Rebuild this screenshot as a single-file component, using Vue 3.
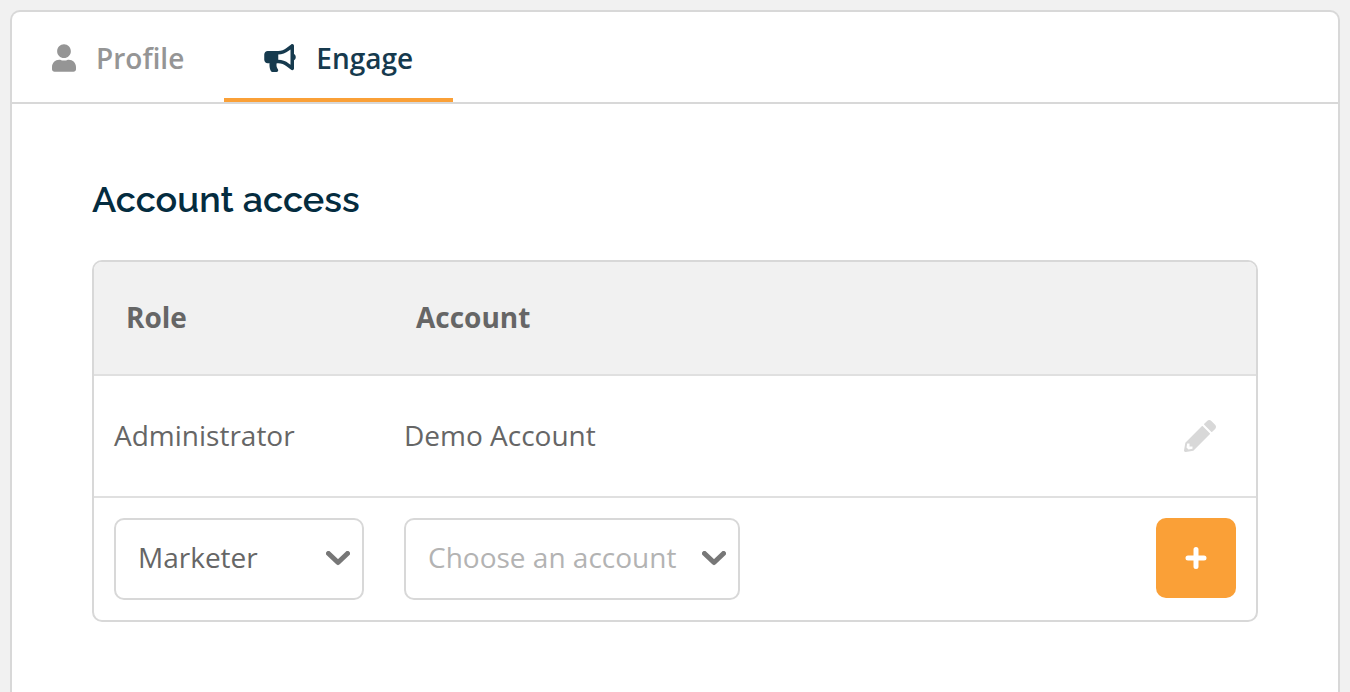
<script setup>
import { ref } from 'vue'

const tabs = [
  {
    id: 'profile',
    label: 'Profile',
    width: 24,
    viewBox: '0 0 448 512',
    path: 'M224 256c70.7 0 128-57.3 128-128S294.7 0 224 0 96 57.3 96 128s57.3 128 128 128zm89.6 32h-16.7c-22.2 10.2-46.9 16-72.9 16s-50.6-5.8-72.9-16h-16.7C60.2 288 0 348.2 0 422.4V464c0 26.5 21.5 48 48 48h352c26.5 0 48-21.5 48-48v-41.6c0-74.2-60.2-134.4-134.4-134.4z',
  },
  {
    id: 'engage',
    label: 'Engage',
    width: 32,
    viewBox: '0 0 576 512',
    path: 'M576 240c0-23.63-12.95-44.04-32-55.12V32.01C544 23.26 537.02 0 512 0c-7.12 0-14.19 2.38-19.98 7.02l-85.03 68.03C364.28 109.19 310.66 128 256 128H64c-35.35 0-64 28.65-64 64v96c0 35.35 28.65 64 64 64h33.7c-1.39 10.48-2.18 21.14-2.18 32 0 39.77 9.26 77.35 25.56 110.94 5.19 10.69 16.52 17.06 28.4 17.06h74.28c26.05 0 41.69-29.84 25.9-50.56-16.4-21.52-26.15-48.36-26.15-77.44 0-11.11 1.62-21.79 4.41-32H256c54.66 0 108.28 18.81 150.99 52.95l85.03 68.03a32.023 32.023 0 0 0 19.98 7.02c24.92 0 32-22.78 32-32V295.13C563.05 284.04 576 263.63 576 240zm-96 141.42l-33.05-26.44C392.95 311.78 325.12 288 256 288v-96c69.12 0 136.95-23.78 190.95-66.98L480 98.58v282.84z',
  },
]
const active = ref('engage')
const rows = ref([{ role: 'Administrator', account: 'Demo Account' }])
const role = ref('Marketer')
const account = ref('')

function addRow() {
  if (account.value) {
    rows.value.push({ role: role.value, account: account.value })
    account.value = ''
  }
}
</script>

<template>
  <main class="card">
    <nav class="tabs" aria-label="Settings">
      <button
        v-for="tab in tabs"
        :key="tab.id"
        type="button"
        class="tab"
        :class="{ active: tab.id === active }"
        @click="active = tab.id"
      >
        <svg :width="tab.width" height="28" :viewBox="tab.viewBox" aria-hidden="true">
          <path :d="tab.path" fill="currentColor" />
        </svg>
        <span>{{ tab.label }}</span>
      </button>
    </nav>

    <section class="content">
      <h1>Account access</h1>
      <div class="frame">
        <table>
          <thead>
            <tr>
              <th class="role-col" scope="col">Role</th>
              <th scope="col">Account</th>
              <th class="action-col"></th>
            </tr>
          </thead>
          <tbody>
            <tr v-for="row in rows" :key="row.role + row.account" class="entry">
              <td>{{ row.role }}</td>
              <td>{{ row.account }}</td>
              <td class="action">
                <button type="button" class="edit" aria-label="Edit">
                  <svg width="32" height="32" viewBox="0 0 512 512" aria-hidden="true">
                    <path
                      fill="currentColor"
                      d="M497.9 142.1l-46.1 46.1c-4.7 4.7-12.3 4.7-17 0l-111-111c-4.7-4.7-4.7-12.3 0-17l46.1-46.1c18.7-18.7 49.1-18.7 67.9 0l60.1 60.1c18.8 18.7 18.8 49.1 0 67.9zM284.2 99.8L21.6 362.4.4 483.9c-2.9 16.4 11.4 30.6 27.8 27.8l121.5-21.3 262.6-262.6c4.7-4.7 4.7-12.3 0-17l-111-111c-4.8-4.7-12.4-4.7-17.1 0zM88 424h48v36.3l-64.5 11.3-31.1-31.1L51.7 376H88v48z"
                    />
                  </svg>
                </button>
              </td>
            </tr>
            <tr class="new">
              <td>
                <div class="picker role">
                  <select v-model="role" aria-label="Role">
                    <option>Marketer</option>
                    <option>Administrator</option>
                  </select>
                  <svg width="24" height="16" viewBox="0 0 24 16" aria-hidden="true">
                    <path d="M2.5 2.5L12 11.5L21.5 2.5" />
                  </svg>
                </div>
              </td>
              <td>
                <div class="picker account">
                  <select v-model="account" :class="{ empty: !account }" aria-label="Account">
                    <option value="" disabled>Choose an account</option>
                    <option>Demo Account</option>
                  </select>
                  <svg width="24" height="16" viewBox="0 0 24 16" aria-hidden="true">
                    <path d="M2.5 2.5L12 11.5L21.5 2.5" />
                  </svg>
                </div>
              </td>
              <td class="action">
                <button type="button" class="add" aria-label="Add" @click="addRow">
                  <svg width="22" height="22" viewBox="0 0 22 22" aria-hidden="true">
                    <path d="M11 2.5V19.5M3 11H19" />
                  </svg>
                </button>
              </td>
            </tr>
          </tbody>
        </table>
      </div>
    </section>
  </main>
</template>

<style>
body {
  background: #f1f1f1;
}
</style>

<style scoped>
.card {
  box-sizing: border-box;
  min-height: calc(100vh - 10px);
  border: 2px solid #d8d8d8;
  border-bottom: 0;
  border-radius: 10px 10px 0 0;
  background: #fff;
  color: #666;
  font: 28px/40px "Open Sans", "Noto Sans", sans-serif;
}
:global(#app) {
  padding: 10px 10px 0;
}
button,
select {
  margin: 0;
  padding: 0;
  border: 0;
  background: none;
  color: inherit;
  font: inherit;
  cursor: pointer;
}
svg {
  display: block;
  flex: none;
}
.tabs {
  display: flex;
  border-bottom: 2px solid #d8d8d8;
}
.tab {
  display: flex;
  align-items: center;
  gap: 20px;
  height: 90px;
  padding: 6px 40px 0;
  border-bottom: 4px solid transparent;
  color: #959595;
  font-weight: 600;
}
.tab.active {
  border-bottom-color: #faa037;
  color: #163a4e;
}
.content {
  padding: 71px 80px;
}
h1 {
  margin: 0 0 37px;
  color: #042c3f;
  font: 600 36px/48px Raleway, Lato, sans-serif;
}
.frame {
  overflow: hidden;
  border: 2px solid #d8d8d8;
  border-radius: 10px;
}
table {
  width: 100%;
  border-spacing: 0;
  table-layout: fixed;
}
.role-col {
  width: 290px;
}
.action-col {
  width: 120px;
}
th {
  box-sizing: border-box;
  height: 114px;
  padding: 0 32px 2px;
  border-bottom: 2px solid #e0e0e0;
  background: #f1f1f1;
  font-weight: 700;
  text-align: left;
}
td {
  padding: 20px;
}
.entry td {
  box-sizing: border-box;
  height: 122px;
  padding: 18px 20px 20px;
  border-bottom: 2px solid #e0e0e0;
}
.entry .action {
  padding: 20px;
}
.role-col,
.action-col {
  box-sizing: border-box;
}
.action button {
  display: flex;
  align-items: center;
  justify-content: center;
  margin-left: auto;
}
.edit {
  width: 72px;
  height: 72px;
  color: #d8d8d8;
}
.picker {
  display: grid;
  align-items: center;
}
.picker > * {
  grid-area: 1 / 1;
}
.picker.role {
  width: 250px;
}
.picker.account {
  width: 336px;
}
select {
  box-sizing: border-box;
  width: 100%;
  height: 82px;
  padding: 0 48px 4px 22px;
  border: 2px solid #d8d8d8;
  border-radius: 10px;
  background: #fff;
  appearance: none;
}
select.empty {
  color: #b3b3b3;
}
.picker svg {
  justify-self: end;
  margin-right: 14px;
  fill: none;
  stroke: #777;
  stroke-width: 5;
  stroke-linecap: round;
  stroke-linejoin: round;
  pointer-events: none;
}
.new .action {
  vertical-align: top;
}
.add {
  width: 80px;
  height: 80px;
  border-radius: 10px;
  background: #faa037;
}
.add svg {
  fill: none;
  stroke: #fff;
  stroke-width: 5;
  stroke-linecap: round;
}
</style>
